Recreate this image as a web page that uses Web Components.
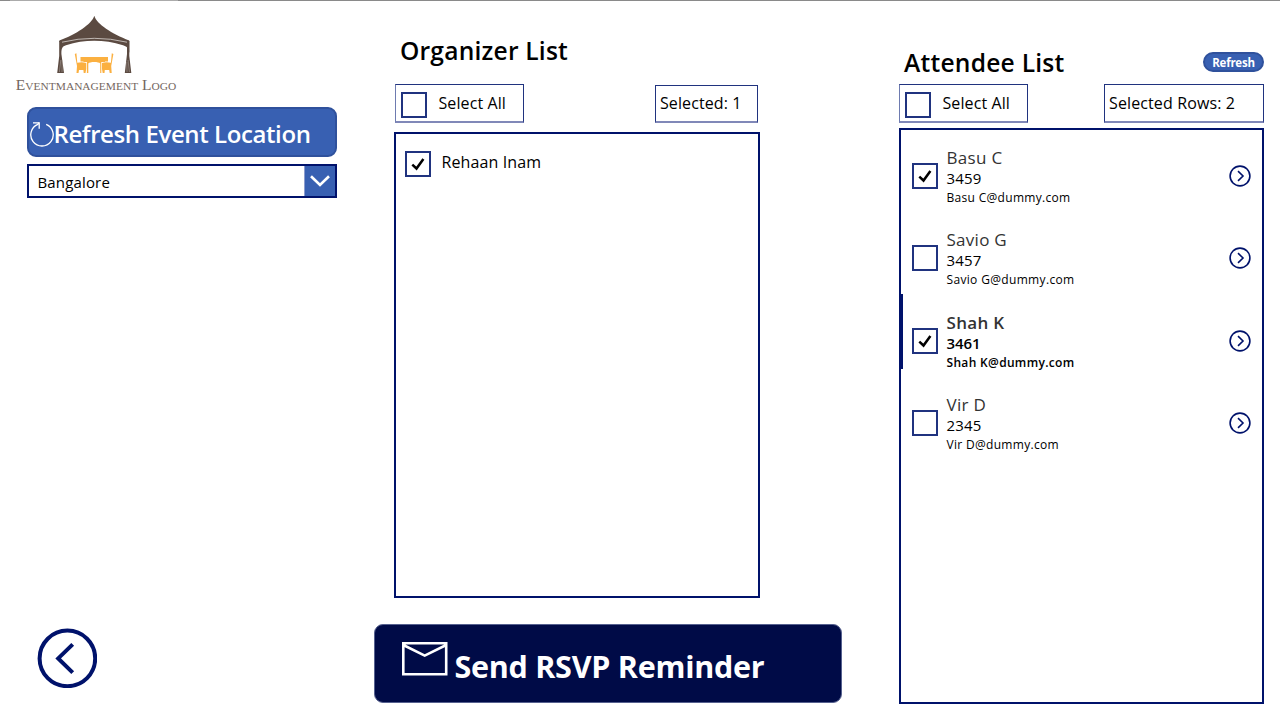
<!DOCTYPE html>
<html lang="en">
<head>
<meta charset="utf-8">
<title>Event RSVP</title>
<style>
html, body { margin: 0; height: 100%; }
body { font-family: "Open Sans", "Noto Sans", sans-serif; color: #000; background: #fff; overflow: hidden; --navy: #00126b; --blue: #3860b2; }
</style>
</head>
<body>
<rsvp-page></rsvp-page>
<script>
function define(name, html, setup) {
  const t = document.createElement('template');
  t.innerHTML = html;
  customElements.define(name, class extends HTMLElement {
    connectedCallback() {
      if (this.shadowRoot) return;
      this.attachShadow({ mode: 'open' }).append(t.content.cloneNode(true));
      if (setup) setup(this, this.shadowRoot);
    }
  });
}

/* One line of text, tracked so that it spans the width given in "w". */
define('fit-text', `<style>
:host { display: block; white-space: nowrap; }
span { display: inline-block; }
</style><span><slot></slot></span>`, (el, root) => {
  const w = parseFloat(el.getAttribute('w'));
  if (!w) return;
  const s = root.querySelector('span');
  const n = el.textContent.length;
  s.style.letterSpacing = ((w - s.getBoundingClientRect().width) / n) + 'px';
});

define('check-box', `<style>
:host { display: block; box-sizing: border-box; width: 26px; height: 26px; border: 2px solid #20337f; background: #fff; flex: none; }
svg { display: none; width: 22px; height: 22px; }
:host([checked]) svg { display: block; }
</style><svg viewBox="0 0 22 22"><path d="M5.3 11.6 L9.5 15.5 L16.4 5.9" fill="none" stroke="#000" stroke-width="2.5"/></svg>`);

define('select-all', `<style>
:host { display: flex; box-sizing: border-box; width: 129px; height: 39px; border: 1px solid #20337f; border-left-color: #6e7bb0; border-bottom: 2px solid #8088b8; padding: 7px 0 0 5px; font-size: 16px; line-height: 22px; }
fit-text { margin: 0 0 0 11.5px; }
</style><check-box></check-box><fit-text w="67.5">Select All</fit-text>`);

define('count-box', `<style>
:host { display: block; box-sizing: border-box; border: 1px solid #20337f; border-bottom: 2px solid #8088b8; padding: 7px 0 0 4px; height: 39px; font-size: 16px; line-height: 22px; }
</style><slot></slot>`);

define('brand-logo', `<style>
:host { display: block; width: 164px; height: 80px; }
svg { display: block; }
text { font-family: "Liberation Serif", serif; font-size: 15px; font-variant: small-caps; fill: #75675f; }
</style>
<svg width="164" height="80" viewBox="15 14 164 80">
<g fill="#5b4a41">
<path d="M94.3 15.8 C96.5 24 112 34 129.2 40.5 V42 C108 36.8 80 36.8 59.4 42 V40.5 C76 34.5 92 24 94.3 15.8Z"/>
<path d="M59.2 41 Q94 33.5 129.3 41 V53 C128.5 47.5 126.5 46.4 123 45.2 Q94 36.5 66 45.2 C62.5 46.4 61.4 47.5 61.4 54 L64 73 H57.2 L59.2 56Z"/>
<path d="M129.3 41 V56 L131.3 73 H124.8 L127 54 V46Z"/>
</g>
<path d="M62 42.2 Q94 34.4 127 42.2" fill="none" stroke="#d9d4d0" stroke-width=".8"/>
<path d="M60.8 60 L59.4 72 M62.2 60 L62 72 M128 60 L129.4 72 M126.8 62 L127 72" stroke="#b7aea8" stroke-width=".5"/>
<g fill="#fbb040">
<path d="M80.5 57 H108 V61.6 H105 V62 H83.5 V61.6 H80.5Z"/>
<path d="M74.8 54 L76.4 53.2 L77.3 62.8 Q82 61.4 86.2 63 V69 L85.5 73 H83.7 L83.4 70 H79 L78.5 73 H76.5 L77 66Z"/>
<path d="M113.4 54 L111.8 53.2 L110.9 62.8 Q106 61.4 102 63 V69 L102.7 73 H104.5 L104.8 70 H109.2 L109.7 73 H111.7 L111.2 66Z"/>
<path d="M86.9 61 H101.3 V73 H100.2 V63.5 C99 61.5 89.5 61.5 88.3 63.5 V73 H86.9Z"/>
</g>
<text x="15.8" y="89.8" textLength="160.5" lengthAdjust="spacingAndGlyphs">Eventmanagement Logo</text>
</svg>`);

define('location-button', `<style>
:host { display: flex; box-sizing: border-box; width: 310px; height: 50px; border: 2px solid #2f519c; border-radius: 9px; background: var(--blue); color: #fff; font-weight: 600; font-size: 24px; line-height: 50px; }
svg { width: 25px; height: 32px; margin: 9.5px 0 0 .5px; flex: none; }
fit-text { margin: 0 0 0 -1px; }
</style>
<svg viewBox="0 0 25 32"><g fill="none" stroke="#fff" stroke-width="1.3"><path d="M16.2 5.4 A11.2 11.2 0 1 1 7.8 5.4 L9 3.6"/><path d="M3 3.8 H9.2 V9.8"/></g></svg>
<fit-text w="257">Refresh Event Location</fit-text>`);

define('location-select', `<style>
:host { display: flex; justify-content: space-between; box-sizing: border-box; width: 310px; height: 34.5px; border: 2px solid var(--navy); font-size: 15px; line-height: 33px; padding-left: 8.5px; }
i { display: block; width: 30px; height: 30.5px; background: var(--blue); border-left: 1px solid #8b9cce; }
svg { display: block; }
</style><fit-text w="72.5">Bangalore</fit-text>
<i><svg width="30" height="30" viewBox="0 0 30 30"><path d="M6 10.2 L15 19 L24 10.2" fill="none" stroke="#fff" stroke-width="2.6"/></svg></i>`);

define('back-button', `<style>
:host { display: block; width: 60px; height: 60px; }
svg { display: block; }
</style><svg width="60" height="60" viewBox="0 0 60 60"><g fill="none" stroke="#00126b"><circle cx="30.4" cy="30.4" r="27.8" stroke-width="4"/><path d="M35.7 16.4 L21.2 30.4 L35.7 44.7" stroke-width="4"/></g></svg>`);

define('list-panel', `<style>
:host { display: flex; flex-direction: column; box-sizing: border-box; box-shadow: inset 0 0 0 2px var(--navy); padding-top: 1px; }
</style><slot></slot>`);

define('organizer-row', `<style>
:host { display: flex; padding: 18px 0 0 11px; font-size: 16px; line-height: 22px; }
</style><check-box checked></check-box><slot></slot>`);

define('attendee-row', `<style>
:host { display: flex; box-sizing: border-box; height: 74.5px; margin-bottom: 8px; padding: 0 12px 0 13px; }
:host([current]) { font-weight: 600; box-shadow: inset 4px 0 0 var(--navy); }
check-box { margin-top: 33.9px; }
.info { flex: 1; padding: 17.5px 0 0 8.5px; }
.n { font-size: 17px; line-height: 22px; color: #333; }
.c { font-size: 15px; line-height: 19px; }
.e { font-size: 12px; line-height: 20px; }
svg { flex: none; margin-top: 34.5px; }
</style><check-box></check-box><div class="info"></div>
<svg width="24" height="24" viewBox="0 0 24 24"><g fill="none" stroke="#00126b" stroke-width="1.6"><circle cx="12" cy="12" r="9.9"/><path d="M10 7.2 L15 12 L10 16.8"/></g></svg>`, (el, root) => {
  if (el.hasAttribute('checked')) root.querySelector('check-box').setAttribute('checked', '');
  const widths = el.getAttribute('widths').split(' ');
  const name = el.getAttribute('name');
  root.querySelector('.info').innerHTML =
    `<fit-text class="n" w="${widths[0]}">${name}</fit-text><fit-text class="c" w="${widths[1]}">${el.getAttribute('code')}</fit-text><fit-text class="e" w="${widths[2]}">${name}@dummy.com</fit-text>`;
});

define('send-button', `<style>
:host { display: flex; box-sizing: border-box; width: 467.5px; height: 79.5px; border-radius: 9px; border: 1px solid #56618f; background: #000b47; color: #fff; font-weight: 700; font-size: 30.5px; line-height: 44px; padding: 0 0 0 26px; }
svg { flex: none; margin-top: 16px; }
fit-text { margin: 19px 0 0 5px; }
</style><svg width="48" height="37" viewBox="0 0 48 37"><path d="M2.3 2.3 H45.2 V33.2 H2.3Z M2.3 4 L23.7 14.6 L45.2 4" fill="none" stroke="#fff" stroke-width="2.6"/></svg>
<fit-text w="310">Send RSVP Reminder</fit-text>`);

define('refresh-pill', `<style>
:host { display: flex; justify-content: center; box-sizing: border-box; width: 61px; height: 20px; border: 2px solid #2f519c; border-radius: 10px; background: var(--blue); color: #fff; font-weight: 700; font-size: 11.5px; line-height: 17px; }
</style><fit-text w="42.5">Refresh</fit-text>`);

define('rsvp-page', `<style>
:host { display: grid; box-sizing: border-box; width: 1280px; height: 720px; grid-template-columns: 375px 524px 381px; background: linear-gradient(90deg, #8a8a8a 10px, #ababab 10px 178px, #8a8a8a 178px) top / 100% 1px no-repeat #fff; }
section { display: flex; flex-direction: column; align-items: flex-start; }
.left { padding-top: 14px; }
brand-logo { margin: 0 0 13.4px 15px; }
location-button, location-select { margin-left: 27px; }
location-button { margin-bottom: 6.4px; }
back-button { margin: auto 0 32px 37px; }
.mid { padding-top: 34px; }
h2 { margin: 0; font-size: 24.6px; font-weight: 600; line-height: 34px; }
.mid h2 { margin: 0 0 16px 25px; }
.tools { display: flex; justify-content: space-between; align-items: flex-start; }
.mid .tools { width: 363px; margin: 0 0 9px 20px; }
.mid count-box { width: 103px; height: 38px; margin-top: 1px; padding-top: 6px; }
.mid list-panel { width: 366px; height: 466.4px; margin: 0 0 25.6px 19px; }
organizer-row fit-text { margin: -.5px 0 0 10.5px; }
send-button { margin-left: -.6px; }
.right { padding-top: 46px; }
.head { display: flex; justify-content: space-between; width: 360px; margin: 0 0 4px 5px; }
.head refresh-pill { margin-top: 6px; }
.right .tools { width: 365px; margin-bottom: 5px; }
.right count-box { width: 160px; }
.right list-panel { width: 365px; height: 576px; }
</style>
<section class="left"><brand-logo></brand-logo><location-button></location-button><location-select></location-select><back-button></back-button></section>
<section class="mid">
<h2><fit-text w="168">Organizer List</fit-text></h2>
<div class="tools"><select-all></select-all><count-box><fit-text w="81.5">Selected: 1</fit-text></count-box></div>
<list-panel><organizer-row><fit-text w="99.7">Rehaan Inam</fit-text></organizer-row></list-panel>
<send-button></send-button>
</section>
<section class="right">
<div class="head"><h2><fit-text w="160.5">Attendee List</fit-text></h2><refresh-pill></refresh-pill></div>
<div class="tools"><select-all></select-all><count-box><fit-text w="126">Selected Rows: 2</fit-text></count-box></div>
<list-panel>
<attendee-row checked name="Basu C" code="3459" widths="56 35 124"></attendee-row>
<attendee-row name="Savio G" code="3457" widths="60.5 35 128"></attendee-row>
<attendee-row checked current name="Shah K" code="3461" widths="58 34 128"></attendee-row>
<attendee-row name="Vir D" code="2345" widths="39.5 35 112.5"></attendee-row>
</list-panel>
</section>`);
</script>
</body>
</html>
